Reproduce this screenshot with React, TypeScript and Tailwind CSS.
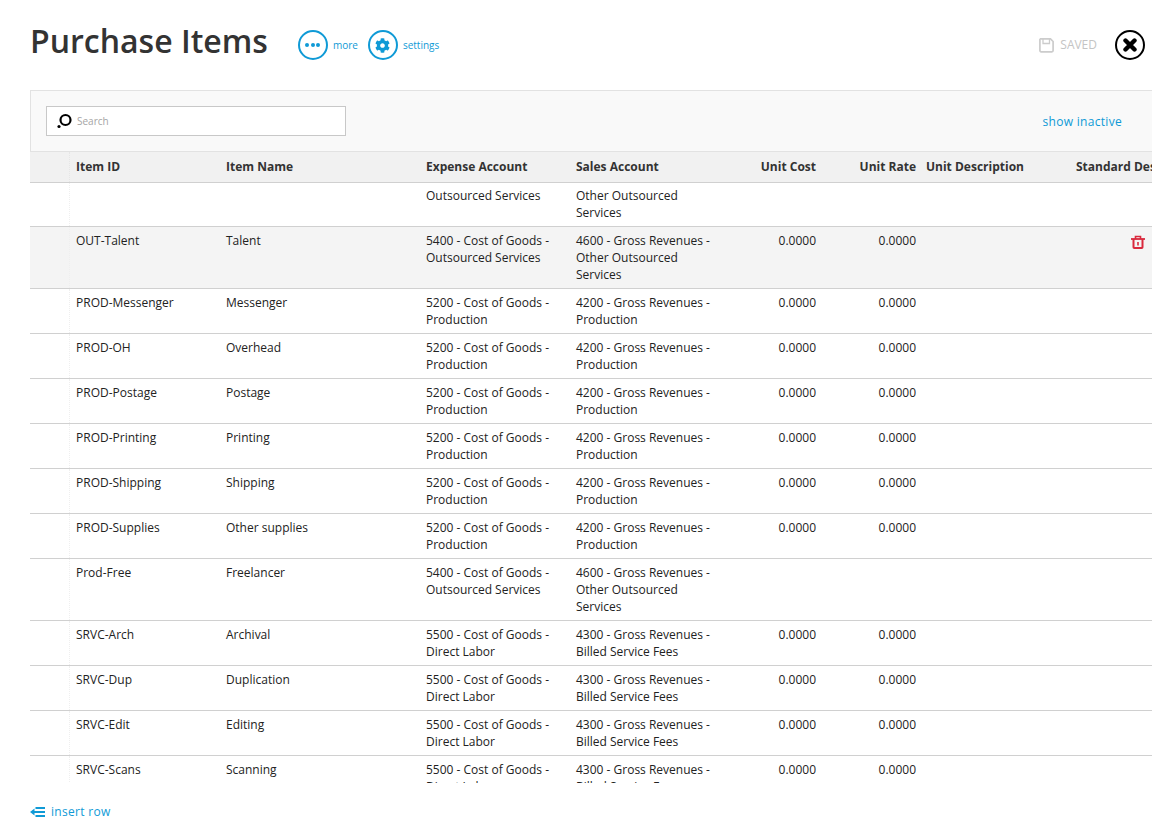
import { FaCog } from 'react-icons/fa';

type Item = {
  id: string;
  name: string;
  expense: string[];
  sales: string[];
  cost?: string;
  rate?: string;
  hover?: boolean;
};

const zero = '0.0000';

const prod = (id: string, name: string): Item => ({
  id,
  name,
  expense: ['5200 - Cost of Goods -', 'Production'],
  sales: ['4200 - Gross Revenues -', 'Production'],
  cost: zero,
  rate: zero,
});

const srvc = (id: string, name: string): Item => ({
  id,
  name,
  expense: ['5500 - Cost of Goods -', 'Direct Labor'],
  sales: ['4300 - Gross Revenues -', 'Billed Service Fees'],
  cost: zero,
  rate: zero,
});

const items: Item[] = [
  {
    id: 'OUT-Talent',
    name: 'Talent',
    expense: ['5400 - Cost of Goods -', 'Outsourced Services'],
    sales: ['4600 - Gross Revenues -', 'Other Outsourced', 'Services'],
    cost: zero,
    rate: zero,
    hover: true,
  },
  prod('PROD-Messenger', 'Messenger'),
  prod('PROD-OH', 'Overhead'),
  prod('PROD-Postage', 'Postage'),
  prod('PROD-Printing', 'Printing'),
  prod('PROD-Shipping', 'Shipping'),
  prod('PROD-Supplies', 'Other supplies'),
  {
    id: 'Prod-Free',
    name: 'Freelancer',
    expense: ['5400 - Cost of Goods -', 'Outsourced Services'],
    sales: ['4600 - Gross Revenues -', 'Other Outsourced', 'Services'],
  },
  srvc('SRVC-Arch', 'Archival'),
  srvc('SRVC-Dup', 'Duplication'),
  srvc('SRVC-Edit', 'Editing'),
  srvc('SRVC-Scans', 'Scanning'),
];

const cols = 'grid grid-cols-[40px_150px_200px_150px_150px_100px_100px_150px_82px]';

function Lines({ lines }: { lines: string[] }) {
  return (
    <div className="pl-1.5 whitespace-nowrap">
      {lines.map((l) => (
        <div key={l}>{l}</div>
      ))}
    </div>
  );
}

function TrashIcon() {
  return (
    <svg width="14" height="14" viewBox="0 0 14 14" fill="none" stroke="#d9293d" strokeWidth="2">
      <path d="M0 4h14" strokeWidth="1.8" />
      <path d="M4.5 4V1.5h5V4" strokeWidth="1.6" />
      <path d="M2.5 4v8.2a0.8 0.8 0 0 0 0.8 0.8h7.4a0.8 0.8 0 0 0 0.8-0.8V4" />
      <path d="M7 7v3.5" strokeWidth="1.6" />
    </svg>
  );
}

function Row({ item }: { item: Item }) {
  return (
    <div className={`${cols} border-b border-[#d0d0d0] py-[5px] ${item.hover ? 'bg-[#f4f4f4]' : ''}`}>
      <div className="border-r border-dotted border-[#efefef] -my-[5px]" />
      <Lines lines={[item.id]} />
      <Lines lines={[item.name]} />
      <Lines lines={item.expense} />
      <Lines lines={item.sales} />
      <div className="text-right pr-1">{item.cost}</div>
      <div className="text-right pr-1">{item.rate}</div>
      <div />
      <div className="flex justify-end pr-[7px] pt-[3px]">{item.hover && <TrashIcon />}</div>
    </div>
  );
}

export default function App() {
  return (
    <div className="w-[1152px] h-[820px] overflow-hidden bg-white font-['Open_Sans',sans-serif] text-[#333]">
      <div className="flex items-center h-[90px] pl-[30px] pr-[7px]">
        <h1 className="text-[32px] font-semibold text-[#333] leading-none mr-[30px] mb-2">Purchase Items</h1>
        <button className="flex items-center gap-[5px] mr-[10px] text-[#0f9ad6] text-[10px]">
          <span className="flex items-center justify-center gap-[1.5px] w-[30px] h-[30px] rounded-full border-2 border-[#0f9ad6]">
            <i className="w-1 h-1 rounded-full bg-[#0f9ad6]" />
            <i className="w-1 h-1 rounded-full bg-[#0f9ad6]" />
            <i className="w-1 h-1 rounded-full bg-[#0f9ad6]" />
          </span>
          more
        </button>
        <button className="flex items-center gap-[5px] text-[#0f9ad6] text-[10px]">
          <span className="flex items-center justify-center w-[30px] h-[30px] rounded-full border-2 border-[#0f9ad6]">
            <FaCog size={15} />
          </span>
          settings
        </button>
        <div className="ml-auto flex items-center gap-[6px] text-[12px] font-medium text-[#c4c4c4]">
          <svg width="15" height="15" viewBox="0 0 15 15" fill="none" stroke="#cccccc" strokeWidth="1.7">
            <path d="M1.5 0.9h10l2.6 2.6v9.1a1.2 1.2 0 0 1-1.2 1.2H2.1a1.2 1.2 0 0 1-1.2-1.2V1.5z" />
            <path d="M4 1v4.5h6.5V1" strokeWidth="1.3" />
          </svg>
          SAVED
        </div>
        <span className="ml-[18px] flex items-center justify-center w-[30px] h-[30px] rounded-full border-2 border-black">
          <svg width="14" height="14" viewBox="0 0 14 14" stroke="black" strokeWidth="4.4" strokeLinecap="round">
            <path d="M2.5 2.5 11.5 11.5M11.5 2.5 2.5 11.5" />
          </svg>
        </span>
      </div>

      <div className="ml-[30px] w-[1122px]">
        <div className="flex items-center justify-between h-[62px] pl-[15px] pr-[30px] bg-[#f9f9f9] border-y border-l border-[#e2e2e2]">
          <div className="flex items-center w-[300px] h-[30px] bg-white border border-[#c8c8c8] pl-[10px]">
            <svg width="16" height="16" viewBox="0 0 16 16" fill="none" className="mr-1">
              <circle cx="8.5" cy="7" r="5" stroke="black" strokeWidth="2.2" />
              <circle cx="2" cy="13.5" r="1.6" fill="black" />
            </svg>
            <span className="text-[10px] text-[#a5a5a5]">Search</span>
          </div>
          <a className="text-[12px] font-medium tracking-[0.3px] text-[#0f9ad6] mt-0.5">show inactive</a>
        </div>

        <div className="h-[631px] overflow-hidden text-[12px] leading-[17px] text-[#222]">
          <div className={`${cols} h-[31px] bg-[#f1f1f1] border-b border-[#d0d0d0] items-center font-bold text-[#333] whitespace-nowrap pb-0.5`}>
            <div className="h-[30px] -mb-0.5 border-r border-dotted border-[#e6e6e6]" />
            <div className="pl-1.5">Item ID</div>
            <div className="pl-1.5">Item Name</div>
            <div className="pl-1.5">Expense Account</div>
            <div className="pl-1.5">Sales Account</div>
            <div className="text-right pr-1">Unit Cost</div>
            <div className="text-right pr-1">Unit Rate</div>
            <div className="pl-1.5">Unit Description</div>
            <div className="pl-1.5 overflow-hidden">Standard Description</div>
          </div>

          <div className="h-[600px] overflow-hidden">
            {/* list is scrolled, only the tail of the first row shows */}
            <div className={`${cols} border-b border-[#d0d0d0] pt-1 pb-[5px]`}>
              <div className="border-r border-dotted border-[#efefef] -mt-1 -mb-[5px]" />
              <div />
              <div />
              <Lines lines={['Outsourced Services']} />
              <Lines lines={['Other Outsourced', 'Services']} />
            </div>
            {items.map((item) => (
              <Row key={item.id} item={item} />
            ))}
          </div>
        </div>

        <a className="flex items-center gap-1.5 mt-5 text-[12px] tracking-[0.3px] text-[#0f9ad6]">
          <svg width="15" height="10" viewBox="0 0 15 10" fill="#0f9ad6">
            <path d="M0 5 4.5 1.5v7z" />
            <rect x="5.5" y="0" width="9.5" height="2" />
            <rect x="4" y="4" width="11" height="2" />
            <rect x="5.5" y="8" width="9.5" height="2" />
          </svg>
          insert row
        </a>
      </div>
    </div>
  );
}
